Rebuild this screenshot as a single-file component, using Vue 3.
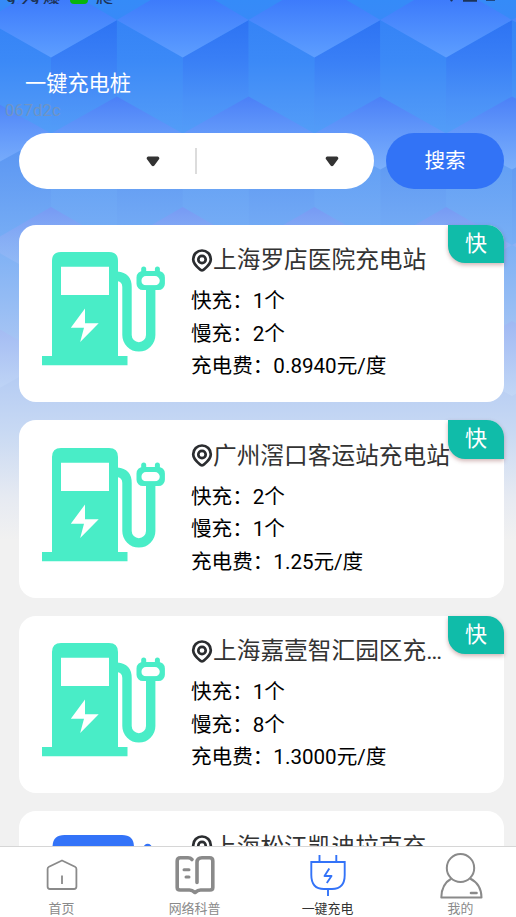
<script setup>
const period = 131.7
const cols = [-1, 0, 1, 2, 3, 4]
const rows = [
  { x: 51, y: -19 },
  { x: -14.8, y: 96.5 },
  { x: 51, y: 207 },
  { x: -14.8, y: 321 }
]
const cubes = rows.flatMap((r, level) => cols.map((c) => ({ x: r.x + c * period, y: r.y, level })))

const stations = [
  { name: '上海罗店医院充电站', fast: 1, slow: 2, price: '0.8940', kind: 'green' },
  { name: '广州滘口客运站充电站', fast: 2, slow: 1, price: '1.25', kind: 'green' },
  { name: '上海嘉壹智汇园区充电站', fast: 1, slow: 8, price: '1.3000', kind: 'green' },
  { name: '上海松江凯迪拉克充', fast: 2, slow: 4, price: '1.2000', kind: 'blue' }
]
</script>

<template>
  <div class="screen">
    <svg class="backdrop" width="516" height="540" viewBox="0 0 516 540">
      <defs>
        <linearGradient id="base" x1="0" y1="0" x2="0" y2="1">
          <stop offset="0" stop-color="#358bf8" />
          <stop offset="0.12" stop-color="#3e87f8" />
          <stop offset="0.25" stop-color="#5a99f5" />
          <stop offset="0.38" stop-color="#6da8f5" />
          <stop offset="0.55" stop-color="#93bbf4" />
          <stop offset="0.68" stop-color="#b2caf3" />
          <stop offset="0.8" stop-color="#c8d9f3" />
          <stop offset="0.92" stop-color="#e6eaf2" />
          <stop offset="1" stop-color="#f1f1f1" />
        </linearGradient>
        <linearGradient id="top" x1="0" y1="0" x2="0" y2="1">
          <stop offset="0.2" stop-color="#3b79fb" />
          <stop offset="1" stop-color="#5d9eff" />
        </linearGradient>
        <linearGradient id="topSoft" x1="0" y1="0" x2="0" y2="1">
          <stop offset="0" stop-color="#4b80f7" />
          <stop offset="0.5" stop-color="#6399fa" />
          <stop offset="1" stop-color="#7bb0fb" />
        </linearGradient>
        <linearGradient id="topFaint" x1="0" y1="0" x2="0" y2="1">
          <stop offset="0" stop-color="#769af4" />
          <stop offset="0.9" stop-color="#a0c2f6" stop-opacity="0.5" />
        </linearGradient>
        <linearGradient id="topPale" x1="0" y1="0" x2="0" y2="1">
          <stop offset="0" stop-color="#a0b8f3" />
          <stop offset="1" stop-color="#c3d8f6" stop-opacity="0.8" />
        </linearGradient>
        <linearGradient id="dark" gradientUnits="userSpaceOnUse" x1="0" y1="39" x2="0" y2="153">
          <stop offset="0" stop-color="#2d73f3" />
          <stop offset="0.35" stop-color="#397ff6" />
          <stop offset="0.7" stop-color="#4a91f7" />
          <stop offset="1" stop-color="#539df8" />
        </linearGradient>
        <linearGradient id="light" gradientUnits="userSpaceOnUse" x1="0" y1="39" x2="0" y2="153">
          <stop offset="0" stop-color="#3583f6" />
          <stop offset="0.35" stop-color="#3b89f7" />
          <stop offset="0.7" stop-color="#4a94f7" />
          <stop offset="1" stop-color="#539df8" />
        </linearGradient>
        <linearGradient id="darkFaint" x1="0" y1="0" x2="0" y2="1">
          <stop offset="0" stop-color="#5793f2" />
          <stop offset="1" stop-color="#78aef5" />
        </linearGradient>
        <linearGradient id="lightFaint" x1="0" y1="0" x2="0" y2="1">
          <stop offset="0" stop-color="#5b9af4" />
          <stop offset="1" stop-color="#79aff5" />
        </linearGradient>
      </defs>
      <rect width="516" height="540" fill="url(#base)" />
      <g v-for="(c, i) in cubes" :key="i" :transform="`translate(${c.x} ${c.y})`">
        <template v-if="c.level === 0">
          <path d="M0 76.500 66.100 39V115.500L0 153Z" fill="url(#dark)" />
          <path d="M0 76.500-65.850 39V115.500L0 153Z" fill="url(#light)" />
          <path d="M0 0 65.850 39 0 76.500-65.850 39Z" fill="url(#top)" />
        </template>
        <template v-else-if="c.level === 1">
          <path d="M0 73 66.100 37V111L0 149Z" fill="url(#darkFaint)" />
          <path d="M0 73-65.850 37V111L0 149Z" fill="url(#lightFaint)" />
          <path d="M0 0 65.850 37 0 73-65.850 37Z" fill="url(#topSoft)" />
        </template>
        <path v-else-if="c.level === 2" d="M0 0 65.850 38 0 75-65.850 38Z" fill="url(#topFaint)" />
        <path v-else d="M0 0 65.850 38 0 75-65.850 38Z" fill="url(#topPale)" />
      </g>
    </svg>

    <div class="status">
      <span class="clock">9:29</span><span class="s1">爆</span><span class="chip"></span><span class="s2">爬</span>
      <span class="grow"></span>
      <svg width="52" height="4" viewBox="0 0 52 4" fill="#1c3358"><path d="M2 0h3L4 1.500H3Z M15 0h14v1.800H15Z M38 0h9v.8H38Z" /></svg>
    </div>

    <header class="title">一键充电桩</header>
    <div class="mark">067d2c</div>

    <div class="search">
      <div class="selects">
        <div class="select first"><svg width="14" height="11" viewBox="0 0 14 11"><path d="M2 .6h10q2.200 1 .8 2.900L8.400 9.500q-1.400 1.500-2.800 0L1.200 3.500Q-.2 1.600 2 .6Z" fill="#333" /></svg></div>
        <div class="divider"></div>
        <div class="select second"><svg width="14" height="11" viewBox="0 0 14 11"><path d="M2 .6h10q2.200 1 .8 2.900L8.400 9.500q-1.400 1.500-2.800 0L1.200 3.500Q-.2 1.600 2 .6Z" fill="#333" /></svg></div>
      </div>
      <button class="go">搜索</button>
    </div>

    <main class="list">
      <article v-for="s in stations" :key="s.name" class="card">
        <svg v-if="s.kind === 'green'" class="pump" width="123" height="114" viewBox="42 252 123 114">
          <path d="M61 252H109Q118 252 118 261V356H127.500V365.300H42V356H52V261Q52 252 61 252Z" fill="#49edc7" />
          <path d="M61 266.700H109V295H61Z M85 308.500 70.800 327.700H84L80.200 342 98.700 323.200H85Z" fill="#fff" />
          <path d="M117 276.200Q127 277 127 287V335a11.850 11.850 0 0 0 23.700 0V288" fill="none" stroke="#49edc7" stroke-width="9.400" />
          <path d="M143.700 269V274M157.400 269V274" stroke="#49edc7" stroke-width="5" stroke-linecap="round" />
          <rect x="138.900" y="273.400" width="23.600" height="14.300" rx="4" fill="#fff" stroke="#49edc7" stroke-width="4.800" />
          <path d="M140 274H162V287H140ZM146 276A4.750 4.750 0 0 0 146 285.500H155A4.750 4.750 0 0 0 155 276Z" fill="#49edc7" fill-rule="evenodd" />
        </svg>
        <svg v-else class="pump blue" width="123" height="122" viewBox="42 244 123 122">
          <path d="M52.500 256Q52.500 244 64.500 244H122Q134 244 134 256V366H52.500Z" fill="#3373f8" />
          <circle cx="147.700" cy="257" r="4.200" fill="#3373f8" />
        </svg>
        <div class="info">
          <div class="name">
            <svg class="pin" width="22" height="24" viewBox="0 0 22 24" fill="none" stroke="#2b2d30" stroke-width="2.700"><path d="M11 21.300Q9.800 21.300 8.500 20Q2.200 14.800 2.200 10.300a8.800 8.800 0 0 1 17.600 0Q19.800 14.800 13.500 20Q12.200 21.300 11 21.300Z" /><circle cx="11" cy="10.500" r="3.700" /></svg>
            <span>{{ s.name }}</span>
          </div>
          <div class="line">快充：{{ s.fast }}个</div>
          <div class="line">慢充：{{ s.slow }}个</div>
          <div class="line">充电费：{{ s.price }}元/度</div>
        </div>
        <div v-if="s.kind === 'green'" class="badge">快</div>
      </article>
    </main>

    <nav class="tabs">
      <div class="tab">
        <svg width="46" height="46" viewBox="0 0 46 46" fill="none" stroke="#8a8a8a" stroke-width="1.800" stroke-linejoin="round"><path d="M8.600 22Q8.600 20.500 10 19.800L23 13.500 36 19.800Q37.400 20.500 37.400 22V39.500Q37.400 42 35 42H11Q8.600 42 8.600 39.500Z" /><path d="M23 28.500V37" /></svg>
        <span>首页</span>
      </div>
      <div class="tab">
        <svg width="46" height="46" viewBox="0 0 46 46" fill="none" stroke="#8a8a8a" stroke-width="3.600" stroke-linecap="round" stroke-linejoin="round"><path d="M20 12.500Q18.500 10.800 16 10.800H8.500Q5.200 10.800 5.200 14V40.500Q5.200 43 8 43H17.500Q20 43 23 45.500Q26 43 28.500 43H38Q40.800 43 40.800 40.500V14Q40.800 10.800 37.500 10.800H30Q25 10.800 25 15.500V35.500" /><path d="M12 22.800H17M14 30H17" stroke-width="3" /></svg>
        <span>网络科普</span>
      </div>
      <div class="tab active">
        <svg width="46" height="46" viewBox="0 0 46 46" fill="none" stroke="#3373f8" stroke-width="1.900"><path d="M6.300 15H39.700V28Q39.700 42 27 42H19Q6.300 42 6.300 28ZM14.500 8V15M31.300 8V15M23 42V49" /><path d="M24.300 21.500 19.500 29H26.500L21.800 36" stroke-linejoin="round" /></svg>
        <span>一键充电</span>
      </div>
      <div class="tab">
        <svg width="46" height="46" viewBox="0 0 46 46" fill="none" stroke="#8a8a8a" stroke-width="2" stroke-linejoin="round"><ellipse cx="22.500" cy="21" rx="13.700" ry="14" /><path d="M13.500 31.500Q3.500 37 3.300 50.500H43.500Q43.300 37 32 31.500" /><path d="M33 46H38.500" stroke-width="2.600" stroke-linecap="round" /></svg>
        <span>我的</span>
      </div>
    </nav>
  </div>
</template>

<style>
body { margin: 0; background: #f1f1f1; }
</style>

<style scoped>
.screen {
  position: relative;
  display: flex;
  flex-direction: column;
  width: 516px;
  height: 917px;
  overflow: hidden;
  background: #f1f1f1;
  font-family: Roboto, "Noto Sans CJK SC", sans-serif;
  color: #000;
}
.backdrop { position: absolute; left: 0; top: 0; }
.status {
  position: relative;
  display: flex;
  align-items: flex-end;
  height: 4px;
  padding: 0 16px 0 6px;
  overflow: hidden;
  color: #1c3358;
  font-size: 17px;
  font-weight: 500;
  line-height: 20px;
  box-sizing: border-box;
}
.clock { width: 37px; line-height: 7px; }
.s1, .s2 { width: 17px; line-height: 13px; }
.chip { width: 18px; height: 10px; margin: 0 8px 0 10px; background: #08b50c; border-radius: 4px; align-self: flex-end; }
.grow { flex: 1; }
.title { position: relative; margin: 63px 0 0 25px; font-size: 21.200px; line-height: 34px; height: 34px; color: #fff; }
.mark { position: relative; margin: 2px 0 0 5px; font-size: 16.500px; line-height: 16px; height: 16px; color: #7094c4; letter-spacing: .1px; }
.search { position: relative; display: flex; gap: 12px; margin: 14px 12px 0 19px; height: 56px; }
.selects { display: flex; align-items: center; width: 355px; height: 56px; border-radius: 28px; background: #fff; }
.select { display: flex; justify-content: flex-end; box-sizing: border-box; }
.first { width: 176px; padding-right: 35px; }
.second { width: 149.500px; padding-right: 8px; flex: none; }
.divider { width: 2px; height: 26px; background: #dcdcdc; }
.go { width: 118px; border: 0; padding: 0; border-radius: 28px; background: #3273f6; color: #fff; font: 20.600px/56px Roboto, "Noto Sans CJK SC", sans-serif; }
.list { position: relative; flex: 1; min-height: 0; overflow: hidden; display: flex; flex-direction: column; gap: 18px; padding: 35.600px 12px 0 19px; }
.card { position: relative; display: flex; flex: none; height: 177.500px; border-radius: 17px; background: #fff; }
.pump { flex: none; margin: 27.500px 0 0 23px; }
.blue { margin-top: 24px; }
.info { margin-left: 26px; padding-top: 18.500px; width: 260px; }
.name { display: flex; align-items: center; height: 34px; margin-bottom: 8px; color: #333; font-size: 23.700px; line-height: 34px; }
.name span { white-space: nowrap; overflow: hidden; text-overflow: ellipsis; width: 239px; }
.pin { flex: none; margin-top: 1px; }
.line { height: 32.700px; font-size: 20.600px; line-height: 32.700px; white-space: nowrap; }
.badge { position: absolute; top: 0; right: 0; width: 56px; height: 38.500px; border-radius: 0 17px 0 17px; background: #10bca9; color: #fff; font-size: 22px; line-height: 37px; text-align: center; box-shadow: 0 2px 4px rgba(120, 40, 40, .35); }
.tabs { position: relative; display: flex; flex: none; height: 71px; box-sizing: border-box; border-top: 1px solid #d6d6d6; background: #fff; }
.tab { display: flex; flex-direction: column; align-items: center; width: 133px; flex: none; color: #8a8a8a; font-size: 12.900px; line-height: 18px; }
.tabs .tab:first-child { margin-left: -5px; }
.tab svg { overflow: visible; height: 46px; flex: none; margin-bottom: 6.500px; }
.active { color: #333; }
</style>
